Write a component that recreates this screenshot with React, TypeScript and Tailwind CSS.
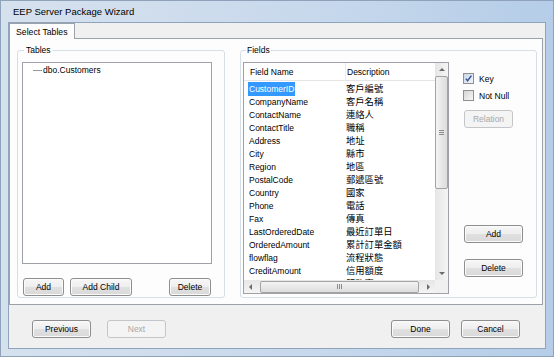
import clsx from 'clsx'

const fields: [string, string][] = [
  ['CustomerID', '客戶編號'],
  ['CompanyName', '客戶名稱'],
  ['ContactName', '連絡人'],
  ['ContactTitle', '職稱'],
  ['Address', '地址'],
  ['City', '縣市'],
  ['Region', '地區'],
  ['PostalCode', '郵遞區號'],
  ['Country', '國家'],
  ['Phone', '電話'],
  ['Fax', '傳真'],
  ['LastOrderedDate', '最近訂單日'],
  ['OrderedAmount', '累計訂單金額'],
  ['flowflag', '流程狀態'],
  ['CreditAmount', '信用額度'],
  ['ServiceDate', '服務窗口'],
]

function Btn({ label, className, disabled }: { label: string; className: string; disabled?: boolean }) {
  return (
    <div
      className={clsx(
        'flex h-[18px] shrink-0 items-center justify-center rounded-[3px] border',
        disabled
          ? 'border-[#c3c6c9] bg-[#f4f4f4] text-[#a8a8a8]'
          : 'border-[#8e8e8e] bg-[linear-gradient(to_bottom,#f7f7f7_0%,#eeeeee_48%,#e0e0e0_52%,#d9d9d9_100%)] text-black shadow-[inset_0_0_0_1px_#fbfbfb]',
        className,
      )}
    >
      {label}
    </div>
  )
}

function Arrow({ dir }: { dir: 'up' | 'down' | 'left' | 'right' }) {
  const pts = {
    up: '1,5 4,2 7,5',
    down: '1,2 4,5 7,2',
    left: '5,1 2,4 5,7',
    right: '2,1 5,4 2,7',
  }[dir]
  return (
    <div className="flex h-[13px] w-[13px] shrink-0 items-center justify-center">
      <svg width="8" height="8" viewBox="0 0 8 8">
        <polygon points={pts} fill="#6a6a6a" />
      </svg>
    </div>
  )
}

function Check({ label, checked }: { label: string; checked?: boolean }) {
  return (
    <div className="flex h-[11px] items-center gap-[5px]">
      <div
        className={clsx(
          'flex h-[11px] w-[11px] items-center justify-center border border-[#8f8f8f]',
          checked
            ? 'bg-[linear-gradient(135deg,#c9d6e8,#f2f6fb)]'
            : 'bg-[linear-gradient(135deg,#d4d4d4,#f7f7f7)]',
        )}
      >
        {checked && (
          <svg width="9" height="9" viewBox="0 0 9 9">
            <path d="M1.8 4.6 L3.6 6.8 L7.4 1.6" stroke="#3a5793" strokeWidth="1.5" fill="none" />
          </svg>
        )}
      </div>
      <span>{label}</span>
    </div>
  )
}

function FieldsList() {
  return (
    <div className="flex h-[232px] w-[206px] shrink-0 flex-col border border-[#9ea2a8] bg-white">
      <div className="flex min-h-0 flex-1">
        <div className="flex min-w-0 flex-1 flex-col overflow-hidden">
          <div className="flex h-[18px] shrink-0 items-center border-b border-[#e5e5e5]">
            <div className="flex h-full w-[102px] shrink-0 items-center border-r border-[#ececec] pl-[6px]">
              Field Name
            </div>
            <div className="pl-[1px]">Description</div>
          </div>
          <div className="flex flex-col pt-[1px]">
            {fields.map(([name, desc], i) => (
              <div key={name} className="flex h-[13px] shrink-0 items-center whitespace-nowrap">
                <div className="w-[102px] shrink-0 pl-[4px]">
                  <span
                    className={clsx(
                      'inline-block h-[14px] px-[1px] leading-[14px]',
                      i === 0 && 'bg-[#3399ff] text-white',
                    )}
                  >
                    {name}
                  </span>
                </div>
                <div className="font-['Noto_Sans_CJK_TC',sans-serif] text-[9.3px] leading-[13px]">{desc}</div>
              </div>
            ))}
          </div>
        </div>
        <div className="flex w-[13px] shrink-0 flex-col bg-[linear-gradient(to_right,#e6e6e6,#f4f4f4)]">
          <Arrow dir="up" />
          <div className="flex h-[113px] shrink-0 items-center justify-center rounded-[2px] border border-[#a3a3a3] bg-[linear-gradient(to_right,#f4f4f4,#dcdcdc)]">
            <div className="flex w-[5px] flex-col gap-[1px]">
              <div className="h-px bg-[#8a8a8a]" />
              <div className="h-px bg-[#8a8a8a]" />
              <div className="h-px bg-[#8a8a8a]" />
            </div>
          </div>
          <div className="flex-1" />
          <Arrow dir="down" />
        </div>
      </div>
      <div className="flex h-[13px] shrink-0">
        <div className="flex flex-1 items-center bg-[linear-gradient(to_bottom,#e6e6e6,#f4f4f4)]">
          <Arrow dir="left" />
          <div className="ml-[3px] flex h-[12px] w-[159px] shrink-0 items-center justify-center rounded-[2px] border border-[#a3a3a3] bg-[linear-gradient(to_bottom,#f4f4f4,#dcdcdc)]">
            <div className="flex h-[5px] gap-[1px]">
              <div className="w-px bg-[#8a8a8a]" />
              <div className="w-px bg-[#8a8a8a]" />
              <div className="w-px bg-[#8a8a8a]" />
            </div>
          </div>
          <div className="flex-1" />
          <Arrow dir="right" />
        </div>
        <div className="w-[13px] shrink-0 bg-[#f0f0f0]" />
      </div>
    </div>
  )
}

export default function App() {
  return (
    <div className="flex h-[357px] w-[554px] flex-col border border-[#8fa2b9] bg-[linear-gradient(to_right,#d6e1ee,#c8d9ec_55%,#b5cde8)] font-['Liberation_Sans','Noto_Sans_CJK_TC',sans-serif] text-[8.5px] leading-[10px] text-black">
      <div className="flex h-[21px] shrink-0 items-center pl-[12px] text-[9.5px]">EEP Server Package Wizard</div>
      <div className="flex min-h-0 flex-1 px-[7px] pb-[7px]">
        <div className="flex flex-1 flex-col border border-[#8ea3bc] bg-[#f0f0f0]">
          <div className="flex h-[15px] shrink-0 items-end">
            <div className="relative z-10 -mb-px flex h-[16px] items-center border border-b-0 border-[#9da2a9] bg-[#fdfdfd] px-[6px] text-[8.7px]">
              Select Tables
            </div>
          </div>
          <div className="mr-[2px] flex h-[267px] shrink-0 gap-[15px] border border-[#9da2a9] bg-[#fdfdfd] pt-[6px] pl-[7px]">
            <fieldset className="h-[253px] w-[208px] shrink-0 rounded-[3px] border border-[#d5dfe5]">
              <legend className="ml-[6px] px-[2px]">Tables</legend>
              <div className="flex flex-col pt-[7px] pl-[4px]">
                <div className="h-[202px] w-[190px] border border-[#9ea2a8] bg-white">
                  <div className="mt-[1px] flex h-[12px] items-center pl-[10px]">
                    <div className="h-px w-[9px] bg-[#9a9a9a]" />
                    <span className="pl-[1px]">dbo.Customers</span>
                  </div>
                </div>
                <div className="mt-[14px] flex w-[190px] items-center gap-[6px] px-[1px]">
                  <Btn label="Add" className="w-[41px]" />
                  <Btn label="Add Child" className="w-[62px]" />
                  <Btn label="Delete" className="ml-auto w-[42px]" />
                </div>
              </div>
            </fieldset>
            <fieldset className="h-[253px] w-[297px] shrink-0 rounded-[3px] border border-[#d5dfe5]">
              <legend className="ml-[5px] px-[1px]">Fields</legend>
              <div className="flex pt-[7px] pl-[2px]">
                <FieldsList />
                <div className="ml-[14px] flex flex-col pt-[11px]">
                  <Check label="Key" checked />
                  <div className="mt-[6px]">
                    <Check label="Not Null" />
                  </div>
                  <div className="mt-[9px] pl-[1px]">
                    <Btn label="Relation" disabled className="w-[49px] text-[#7f7f7f]" />
                  </div>
                  <div className="mt-[97px] flex flex-col gap-[16px] pl-[1px]">
                    <Btn label="Add" className="w-[59px]" />
                    <Btn label="Delete" className="w-[59px]" />
                  </div>
                </div>
              </div>
            </fieldset>
          </div>
          <div className="flex flex-1 items-start pt-[15px] pr-[25px] pl-[23px]">
            <Btn label="Previous" className="w-[59px]" />
            <Btn label="Next" disabled className="ml-[16px] w-[59px]" />
            <div className="flex-1" />
            <Btn label="Done" className="w-[59px]" />
            <Btn label="Cancel" className="ml-[11px] w-[59px]" />
          </div>
        </div>
      </div>
    </div>
  )
}
